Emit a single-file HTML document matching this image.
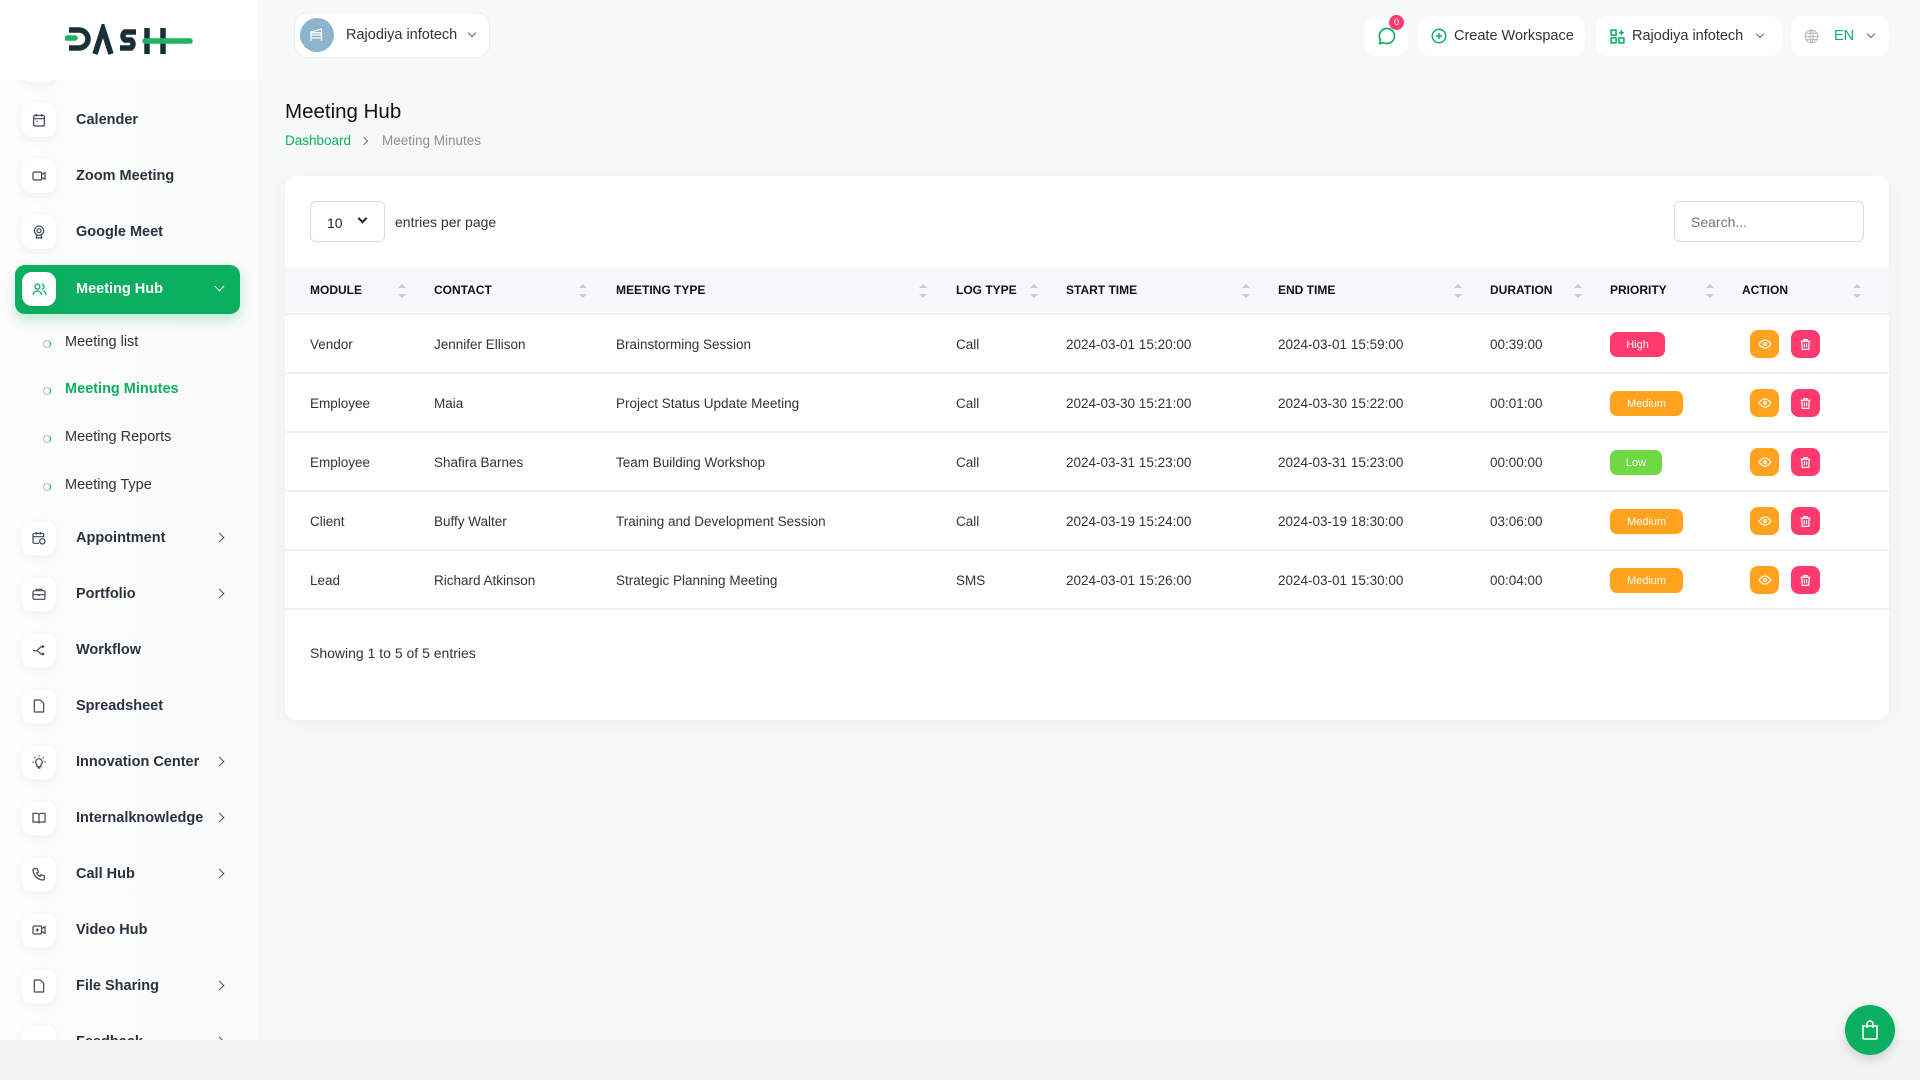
<!DOCTYPE html>
<html><head><meta charset="utf-8">
<style>
*{box-sizing:border-box;margin:0;padding:0}
body{width:1920px;height:1080px;overflow:hidden;background:#f7f8f8;font-family:"Liberation Sans",sans-serif;color:#293240;position:relative}
.side{position:absolute;left:0;top:0;width:258px;height:1040px;background:linear-gradient(90deg,#fdfdfd,#f9fafa);overflow:hidden}
.logo{position:absolute;left:0;top:0;width:258px;height:80px;background:#fff;z-index:2}
.item{position:absolute;left:22px;height:34px;display:flex;align-items:center;width:210px}
.ib{width:34px;height:34px;border-radius:10px;background:#fff;box-shadow:0 3px 10px rgba(0,0,0,.06);display:flex;align-items:center;justify-content:center}
.item .t{margin-left:20px;font-size:14.5px;font-weight:bold;color:#293240}
.item .ch{position:absolute;left:194px;top:13px;width:7px;height:7px;border-right:1.5px solid #555;border-bottom:1.5px solid #555;transform:rotate(-45deg)}
.active{position:absolute;left:15px;top:265px;width:225px;height:49px;background:#0caf60;border-radius:10px;box-shadow:0 6px 12px rgba(12,175,96,.25)}
.sub{position:absolute;left:65px;font-size:14.5px;color:#333}
.sub:before{content:"";position:absolute;left:-22px;top:6px;width:6px;height:6px;border-radius:50%;border:1.5px solid #bbb;border-right-color:#0caf60}
.bottom{position:absolute;left:0;top:1040px;width:1920px;height:40px;background:#f2f3f3}
.hbtn{position:absolute;top:16px;height:40px;background:#fff;border-radius:12px;display:flex;align-items:center;font-size:14.5px;color:#333}
.card{position:absolute;left:285px;top:176px;width:1604px;height:544px;background:#fff;border-radius:12px;box-shadow:0 4px 20px rgba(0,0,0,.04)}
.th{position:absolute;left:0;top:91px;width:1604px;height:48px;background:#f6f8fb;border-bottom:2px solid #eef0f2}
.th span{position:absolute;top:16px;font-size:12px;font-weight:bold;color:#111}
.sa{position:absolute;top:17px;width:6px;height:14px}
.sa:before,.sa:after{content:"";position:absolute;left:0;border-left:4px solid transparent;border-right:4px solid transparent}
.sa:before{top:0;border-bottom:4px solid #ccc}.sa:after{bottom:0;border-top:4px solid #ccc}
.row{position:absolute;left:0;width:1604px;height:59px;border-bottom:2px solid #f0f1f3}
.row span{position:absolute;top:22px;font-size:13.5px;color:#333}
.badge{position:absolute;top:17px;height:25px;border-radius:7px;color:#fff;font-size:11px;display:flex;align-items:center;justify-content:center}
.ab{position:absolute;top:15px;width:29px;height:28px;border-radius:8px;display:flex;align-items:center;justify-content:center}
</style></head><body>
<div class="side">
 <div style="position:absolute;left:22px;top:60px;width:34px;height:22px;background:#fff;border-radius:10px;box-shadow:0 3px 10px rgba(0,0,0,.06)"></div>
 <div class="logo">
  <svg width="130" height="34" viewBox="0 0 130 34" style="position:absolute;left:65px;top:24px">
   <g fill="none" stroke="#18303a" stroke-width="5.5" stroke-linecap="butt">
    <path d="M4 6h10a9 9 0 0 1 0 18H4"/>
    <path d="M30 30L38 5L46 30"/>
    <path d="M71 8H60a5 5 0 0 0 0 8h6a5 5 0 0 1 0 8H55"/>
    <path d="M82 4v26M98 4v26"/>
   </g>
   <path d="M2 14h8M80 17h45" stroke="#1fb35f" stroke-width="5.5" stroke-linecap="round"/>
  </svg>
 </div>
 <div class="item" style="top:103px"><div class="ib"><svg width="16" height="16" viewBox="0 0 24 24" fill="none" stroke="#3d4656" stroke-width="1.8"><rect x="4" y="5" width="16" height="16" rx="2"/><path d="M4 10h16M8 3v4M16 3v4M8 14h2"/></svg></div><span class="t">Calender</span></div>
 <div class="item" style="top:159px"><div class="ib"><svg width="16" height="16" viewBox="0 0 24 24" fill="none" stroke="#3d4656" stroke-width="1.8"><rect x="3" y="6" width="13" height="12" rx="2"/><path d="M16 10l5-3v10l-5-3"/></svg></div><span class="t">Zoom Meeting</span></div>
 <div class="item" style="top:215px"><div class="ib"><svg width="16" height="16" viewBox="0 0 24 24" fill="none" stroke="#3d4656" stroke-width="1.8"><circle cx="12" cy="10" r="7"/><circle cx="12" cy="10" r="3"/><path d="M7 21h10M9 17l-1 4M15 17l1 4"/></svg></div><span class="t">Google Meet</span></div>
 <div class="active"></div>
 <div class="item" style="top:272px"><div class="ib"><svg width="17" height="17" viewBox="0 0 24 24" fill="none" stroke="#0caf60" stroke-width="1.8"><circle cx="9" cy="8" r="3.5"/><path d="M3 20a6 6 0 0 1 12 0M15 4.5a3.5 3.5 0 0 1 0 7M17 14a5 5 0 0 1 4 6"/></svg></div><span class="t" style="color:#fff">Meeting Hub</span><div class="ch" style="border-color:#fff;transform:rotate(45deg);top:11px"></div></div>
 <div class="sub" style="top:334px">Meeting list</div>
 <div class="sub" style="top:381px;color:#0caf60;font-weight:bold">Meeting Minutes</div>
 <div class="sub" style="top:429px">Meeting Reports</div>
 <div class="sub" style="top:477px">Meeting Type</div>
 <div class="item" style="top:521px"><div class="ib"><svg width="16" height="16" viewBox="0 0 24 24" fill="none" stroke="#3d4656" stroke-width="1.8"><path d="M12 20H5a2 2 0 0 1-2-2V7a2 2 0 0 1 2-2h12a2 2 0 0 1 2 2v4M3 10h16M8 3v4M14 3v4"/><circle cx="17" cy="17" r="4"/></svg></div><span class="t">Appointment</span><div class="ch"></div></div>
 <div class="item" style="top:577px"><div class="ib"><svg width="16" height="16" viewBox="0 0 24 24" fill="none" stroke="#3d4656" stroke-width="1.8"><rect x="3" y="7" width="18" height="13" rx="2"/><path d="M8 7V5h8v2M3 13h18M12 12v3"/></svg></div><span class="t">Portfolio</span><div class="ch"></div></div>
 <div class="item" style="top:633px"><div class="ib"><svg width="16" height="16" viewBox="0 0 24 24" fill="none" stroke="#3d4656" stroke-width="1.8"><path d="M3 13h6l6-6h5M9 13l6 5h5M17 5l2 2-2 2M17 16l2 2-2 2"/></svg></div><span class="t">Workflow</span></div>
 <div class="item" style="top:689px"><div class="ib"><svg width="16" height="16" viewBox="0 0 24 24" fill="none" stroke="#3d4656" stroke-width="1.8"><path d="M6 3h8l5 5v12a1 1 0 0 1-1 1H6a1 1 0 0 1-1-1V4a1 1 0 0 1 1-1z"/></svg></div><span class="t">Spreadsheet</span></div>
 <div class="item" style="top:745px"><div class="ib"><svg width="16" height="16" viewBox="0 0 24 24" fill="none" stroke="#3d4656" stroke-width="1.8"><path d="M9 16a5 5 0 1 1 6 0v3H9zM10 21h4M2 12h2M20 12h2M12 2v2M5 5l1.5 1.5M19 5l-1.5 1.5"/></svg></div><span class="t">Innovation Center</span><div class="ch"></div></div>
 <div class="item" style="top:801px"><div class="ib"><svg width="16" height="16" viewBox="0 0 24 24" fill="none" stroke="#3d4656" stroke-width="1.8"><path d="M3 5h6a3 3 0 0 1 3 3v12a2 2 0 0 0-2-2H3zM21 5h-6a3 3 0 0 0-3 3v12a2 2 0 0 1 2-2h7z"/></svg></div><span class="t">Internalknowledge</span><div class="ch"></div></div>
 <div class="item" style="top:857px"><div class="ib"><svg width="16" height="16" viewBox="0 0 24 24" fill="none" stroke="#3d4656" stroke-width="1.8"><path d="M5 4h4l2 5-2.5 1.5a11 11 0 0 0 5 5L15 13l5 2v4a2 2 0 0 1-2 2A16 16 0 0 1 3 6a2 2 0 0 1 2-2"/></svg></div><span class="t">Call Hub</span><div class="ch"></div></div>
 <div class="item" style="top:913px"><div class="ib"><svg width="16" height="16" viewBox="0 0 24 24" fill="none" stroke="#3d4656" stroke-width="1.8"><rect x="3" y="6" width="13" height="12" rx="2"/><path d="M16 10l5-3v10l-5-3M7 12h5M9.5 9.5v5"/></svg></div><span class="t">Video Hub</span></div>
 <div class="item" style="top:969px"><div class="ib"><svg width="16" height="16" viewBox="0 0 24 24" fill="none" stroke="#3d4656" stroke-width="1.8"><path d="M6 3h8l5 5v12a1 1 0 0 1-1 1H6a1 1 0 0 1-1-1V4a1 1 0 0 1 1-1z"/></svg></div><span class="t">File Sharing</span><div class="ch"></div></div>
 <div class="item" style="top:1025px"><div class="ib"></div><span class="t">Feedback</span><div class="ch"></div></div>
</div>
<div class="bottom"></div>

<div class="hbtn" style="left:294px;top:12px;width:196px;height:46px;border:1px solid #eee;border-radius:14px">
 <div style="width:34px;height:34px;border-radius:50%;background:#8eb3cf;margin-left:5px;display:flex;align-items:center;justify-content:center"><svg width="18" height="18" viewBox="0 0 24 24" fill="none" stroke="#fff" stroke-width="1.6"><path d="M4 20V8l14-4v16M4 12h14M4 16h14M4 9h14"/></svg></div>
 <span style="margin-left:12px">Rajodiya infotech</span>
 <span style="margin-left:12px;width:6px;height:6px;border-right:1.3px solid #666;border-bottom:1.3px solid #666;transform:rotate(45deg);margin-top:-4px"></span>
</div>

<div class="hbtn" style="left:1365px;width:43px;justify-content:center"><svg width="20" height="20" viewBox="0 0 24 24" fill="none" stroke="#0caf60" stroke-width="2"><path d="M12 3a9 9 0 0 1 0 18c-1.6 0-3-.4-4.3-1L3 21l1.2-4.2A9 9 0 0 1 12 3z"/><path d="M8 12h.01M12 12h.01M16 12h.01" stroke-width="2.5"/></svg>
 <div style="position:absolute;left:24px;top:-1px;width:15px;height:15px;border-radius:50%;background:#ff3a6e;color:#fff;font-size:9px;text-align:center;line-height:15px">0</div></div>
<div class="hbtn" style="left:1418px;width:167px"><svg style="margin-left:12px" width="18" height="18" viewBox="0 0 24 24" fill="none" stroke="#0caf60" stroke-width="2"><circle cx="12" cy="12" r="9"/><path d="M12 8v8M8 12h8"/></svg><span style="margin-left:6px">Create Workspace</span></div>
<div class="hbtn" style="left:1596px;width:186px"><svg style="margin-left:13px" width="17" height="17" viewBox="0 0 24 24" fill="none" stroke="#0caf60" stroke-width="2.2"><rect x="3" y="3" width="7" height="7"/><rect x="3" y="14" width="7" height="7"/><rect x="14" y="14" width="7" height="7"/><path d="M17.5 3v7M14 6.5h7"/></svg><span style="margin-left:6px">Rajodiya infotech</span><span style="margin-left:14px;width:6px;height:6px;border-right:1.3px solid #666;border-bottom:1.3px solid #666;transform:rotate(45deg);margin-top:-4px"></span></div>
<div class="hbtn" style="left:1791px;width:98px"><svg style="margin-left:12px" width="17" height="17" viewBox="0 0 24 24" fill="none" stroke="#bbb" stroke-width="1.6"><circle cx="12" cy="12" r="9"/><path d="M3 12h18M12 3c3 3 3 15 0 18M12 3c-3 3-3 15 0 18M4.5 7.5h15M4.5 16.5h15"/></svg><span style="margin-left:14px;color:#0caf60">EN</span><span style="margin-left:14px;width:6px;height:6px;border-right:1.3px solid #666;border-bottom:1.3px solid #666;transform:rotate(45deg);margin-top:-4px"></span></div>

<div style="position:absolute;left:285px;top:100px;font-size:20.5px;color:#111">Meeting Hub</div>
<div style="position:absolute;left:285px;top:133px;font-size:13.5px;color:#0caf60">Dashboard</div>
<div style="position:absolute;left:361px;top:138px;width:6px;height:6px;border-right:1.2px solid #777;border-top:1.2px solid #777;transform:rotate(45deg)"></div>
<div style="position:absolute;left:382px;top:133px;font-size:13.5px;color:#8a8f96">Meeting Minutes</div>

<div class="card">
 <div style="position:absolute;left:25px;top:25px;width:75px;height:41px;border:1px solid #d7dbe0;border-radius:6px;font-size:14px;color:#222;padding:13px 0 0 16px">10<span style="position:absolute;left:48px;top:13px;width:7px;height:7px;border-right:2px solid #222;border-bottom:2px solid #222;transform:rotate(45deg)"></span></div>
 <div style="position:absolute;left:110px;top:38px;font-size:14px;color:#333">entries per page</div>
 <div style="position:absolute;left:1389px;top:25px;width:190px;height:41px;border:1px solid #d7dbe0;border-radius:6px;font-size:14px;color:#777;padding:12px 0 0 16px">Search...</div>
 <div class="th">
  <span style="left:25px">MODULE</span><i class="sa" style="left:113px"></i>
  <span style="left:149px">CONTACT</span><i class="sa" style="left:294px"></i>
  <span style="left:331px">MEETING TYPE</span><i class="sa" style="left:634px"></i>
  <span style="left:671px">LOG TYPE</span><i class="sa" style="left:745px"></i>
  <span style="left:781px">START TIME</span><i class="sa" style="left:957px"></i>
  <span style="left:993px">END TIME</span><i class="sa" style="left:1169px"></i>
  <span style="left:1205px">DURATION</span><i class="sa" style="left:1289px"></i>
  <span style="left:1325px">PRIORITY</span><i class="sa" style="left:1421px"></i>
  <span style="left:1457px">ACTION</span><i class="sa" style="left:1568px"></i>
 </div>
</div>
<script>
var d=[["Vendor","Jennifer Ellison","Brainstorming Session","Call","2024-03-01 15:20:00","2024-03-01 15:59:00","00:39:00","High"],
["Employee","Maia","Project Status Update Meeting","Call","2024-03-30 15:21:00","2024-03-30 15:22:00","00:01:00","Medium"],
["Employee","Shafira Barnes","Team Building Workshop","Call","2024-03-31 15:23:00","2024-03-31 15:23:00","00:00:00","Low"],
["Client","Buffy Walter","Training and Development Session","Call","2024-03-19 15:24:00","2024-03-19 18:30:00","03:06:00","Medium"],
["Lead","Richard Atkinson","Strategic Planning Meeting","SMS","2024-03-01 15:26:00","2024-03-01 15:30:00","00:04:00","Medium"]];
var xs=[25,149,331,671,781,993,1205],h="",card=document.querySelector('.card');
var bc={High:["#ff3a6e",55],Medium:["#ffa21d",73],Low:["#6fd943",52]};
d.forEach(function(r,i){h+='<div class="row" style="top:'+(139+i*59)+'px">';
for(var j=0;j<7;j++)h+='<span style="left:'+xs[j]+'px">'+r[j]+'</span>';
var b=bc[r[7]];h+='<div class="badge" style="left:1325px;width:'+b[1]+'px;background:'+b[0]+'">'+r[7]+'</div>';
h+='<div class="ab" style="left:1465px;background:#ffa21d"><svg width="14" height="14" viewBox="0 0 24 24" fill="none" stroke="#fff" stroke-width="2"><path d="M2 12s4-7 10-7 10 7 10 7-4 7-10 7S2 12 2 12z"/><circle cx="12" cy="12" r="2.5"/></svg></div>';
h+='<div class="ab" style="left:1506px;background:#ff3a6e"><svg width="13" height="13" viewBox="0 0 24 24" fill="none" stroke="#fff" stroke-width="2.2"><path d="M3 6h18M9 6V3h6v3M5 6l1 15h12l1-15M10 10v7M14 10v7"/></svg></div></div>';});
h+='<div style="position:absolute;left:25px;top:469px;font-size:14px;color:#333">Showing 1 to 5 of 5 entries</div>';
card.insertAdjacentHTML('beforeend',h);
</script>
<div style="position:absolute;left:1845px;top:1005px;width:50px;height:50px;border-radius:50%;background:#0caf60;box-shadow:0 4px 10px rgba(0,0,0,.15);display:flex;align-items:center;justify-content:center"><svg width="24" height="24" viewBox="0 0 24 24" fill="none" stroke="#fff" stroke-width="1.6"><path d="M5 8h14v12a1 1 0 0 1-1 1H6a1 1 0 0 1-1-1zM9 10V6a3 3 0 0 1 6 0v4"/></svg></div>
</body></html>
